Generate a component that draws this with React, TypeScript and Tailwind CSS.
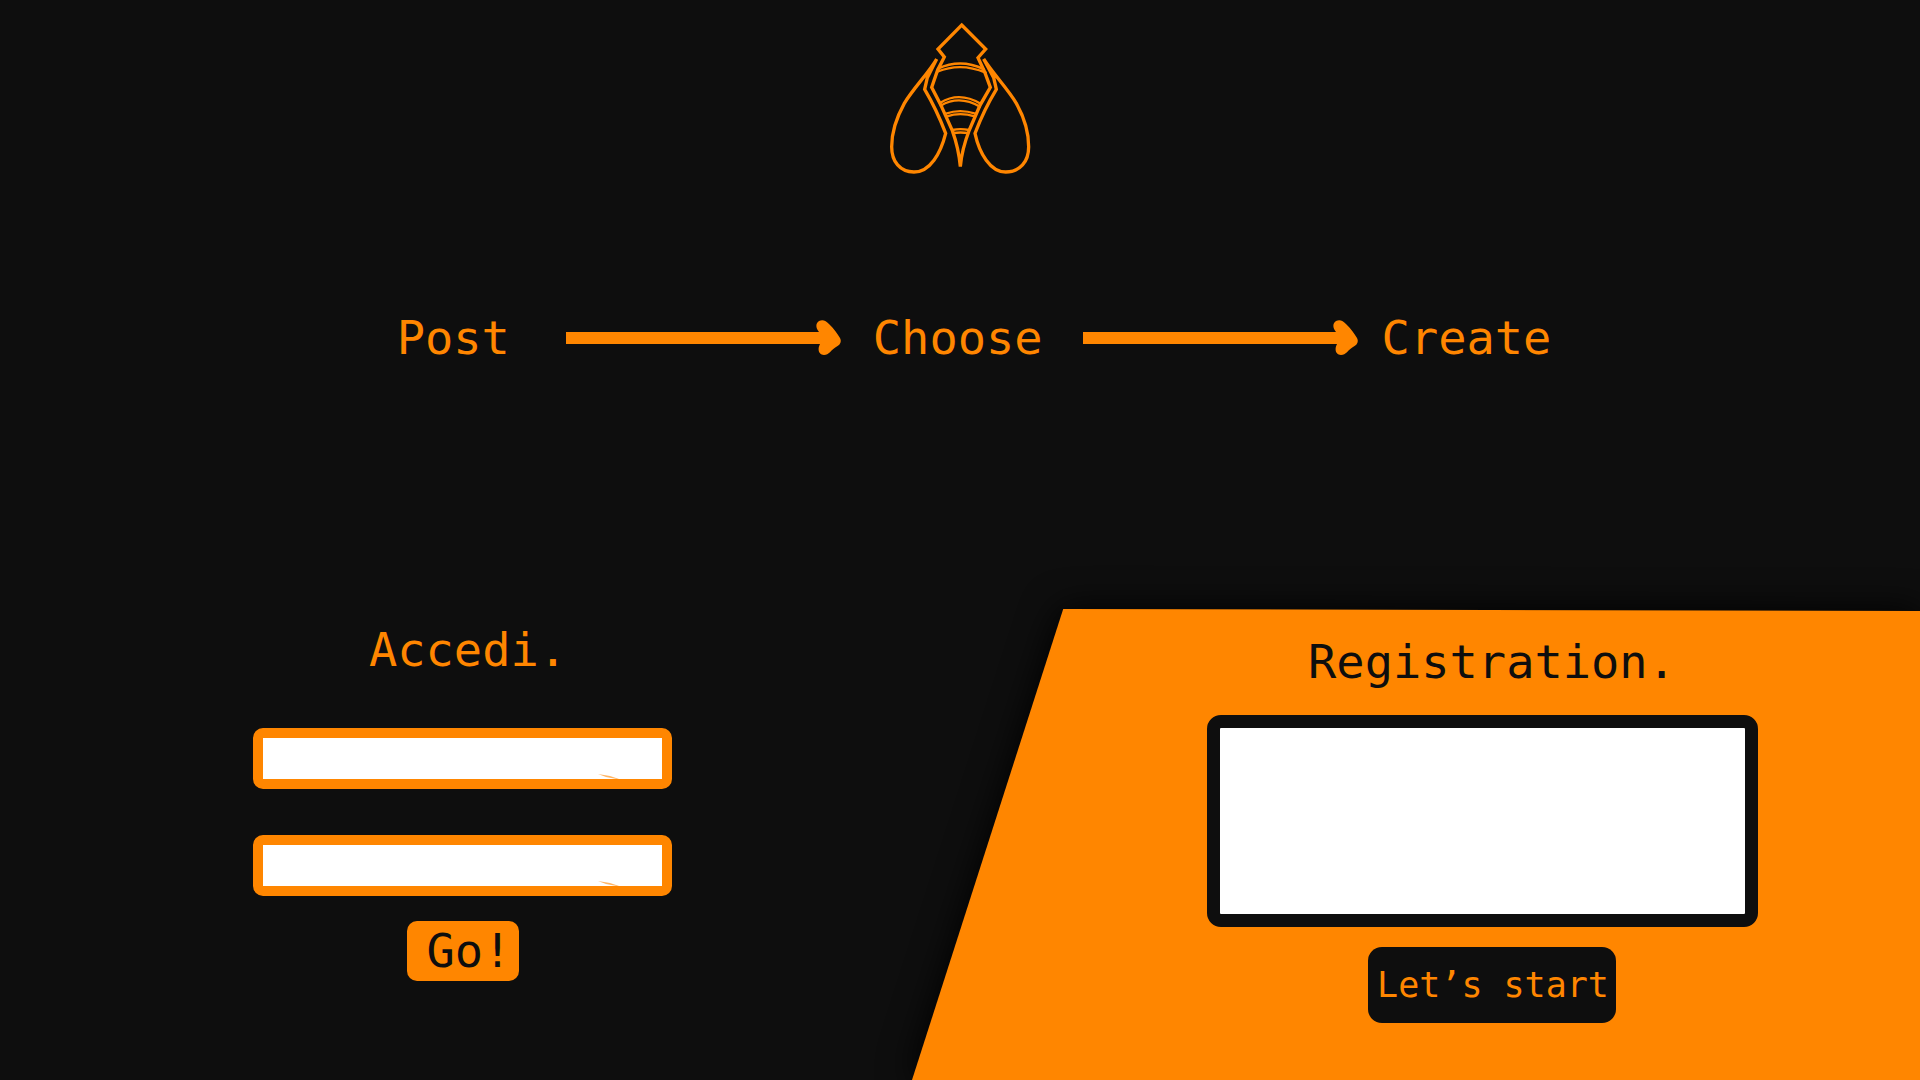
import React from "react";

function BeeLogo() {
  return (
    <svg
      viewBox="0 0 540 540"
      className="size-[180px]"
      fill="none"
      stroke="#ff8600"
      strokeWidth="10"
      strokeLinecap="round"
      strokeLinejoin="miter"
      role="img"
      aria-label="Bee"
    >
      <path d="M275 45L347 117L324 143L344 186L361 232L330 286L298 360Q275 420 271 470Q266 415 247 362L212 284L185 232L203 180L223 141L204 117Z" />
      <g strokeWidth="7">
        <path d="M204 176Q272 144 342 178M202 185Q272 156 347 188" />
        <path d="M211 278Q268 243 332 281M212 287Q268 254 330 290" />
        <path d="M228 311Q270 296 316 311M231 319Q270 306 314 319" />
        <path d="M247 360Q271 355 297 360M249 369Q271 366 294 369" />
      </g>
      <path d="M200 147L172 203L164 238Q200 299 227 370C212 430 180 486 132 486C90 486 65 455 65 410C65 370 78 325 103 280C130 235 175 190 200 147Z" />
      <path d="M341 147L371 203L379 238Q342 299 315 370C328 430 361 486 407 486C450 486 476 455 476 410C476 370 464 325 439 280C412 235 368 190 341 147Z" />
    </svg>
  );
}

function Arrow({ className }: { className: string }) {
  return (
    <svg viewBox="0 0 275 40" className={`h-10 w-[275px] shrink-0 ${className}`} fill="#ff8600" aria-hidden="true">
      <path d="M0 14H253C249 9 250 5 253 3C257 1 260 3 263 6C268 11 271 15 274 20C276 24 274 27 270 29C265 32 263 37 258 37C253 37 251 32 254 26H0Z" />
    </svg>
  );
}

function LoginField({ label, type, name }: { label: string; type: string; name: string }) {
  return (
    <div className="relative w-[419px]">
      <input
        type={type}
        name={name}
        aria-label={label}
        className="block h-[61px] w-full rounded-[10px] border-10 border-[#ff8600] bg-white px-3 text-2xl text-[#0e0e0e] outline-none"
      />
      <svg viewBox="0 0 24 6" className="pointer-events-none absolute right-[50px] bottom-[9px] h-[6px] w-6" fill="#ff8600" aria-hidden="true">
        <path d="M0 0L12 2L24 6L8 3Z" opacity="0.6" />
      </svg>
    </div>
  );
}

export default function App() {
  return (
    <div className="flex min-h-screen flex-col overflow-hidden bg-[#0e0e0e] font-['DejaVu_Sans_Mono',monospace] text-[47px] leading-14 text-[#ff8600]">
      <header className="flex justify-center pt-[10px]">
        <BeeLogo />
      </header>

      <section className="mt-[120px] flex items-center justify-center pl-7">
        <span>Post</span>
        <Arrow className="mr-8 ml-14" />
        <span>Choose</span>
        <Arrow className="mr-6 ml-10" />
        <span>Create</span>
      </section>

      <main className="mt-[243px] flex flex-1">
        <form className="flex flex-1 flex-col items-center pt-[13px] pl-3" onSubmit={(e) => e.preventDefault()}>
          <h2 className="pl-3">Accedi.</h2>
          <div className="mt-[50px] flex flex-col gap-[46px]">
            <LoginField label="Email" type="text" name="email" />
            <LoginField label="Password" type="password" name="password" />
          </div>
          <button type="submit" className="mt-[25px] ml-[2px] h-[60px] rounded-[10px] bg-[#ff8600] pr-2 pl-5 text-[#0e0e0e]">
            Go!
          </button>
        </form>

        <form className="relative w-[52.5%]" onSubmit={(e) => e.preventDefault()}>
          <div className="absolute inset-0 drop-shadow-[0_0_18px_#000]">
            <div className="h-full bg-[#ff8600] [clip-path:polygon(15%_0,100%_2px,100%_100%,0_100%)]" />
          </div>
          <div className="relative flex flex-col items-center pt-[25px] pl-[152px]">
            <h2 className="text-[#0e0e0e]">Registration.</h2>
            <textarea
              aria-label="Registration details"
              className="mt-[25px] mr-5 block h-[212px] w-[551px] resize-none rounded-[14px] border-13 border-[#0e0e0e] bg-white p-3 text-2xl text-[#0e0e0e] outline-none"
            />
            <button type="submit" className="mt-5 h-[76px] rounded-[14px] bg-[#0e0e0e] pr-[7px] pl-[9px] text-[35px]">
              Let’s start
            </button>
          </div>
        </form>
      </main>
    </div>
  );
}
